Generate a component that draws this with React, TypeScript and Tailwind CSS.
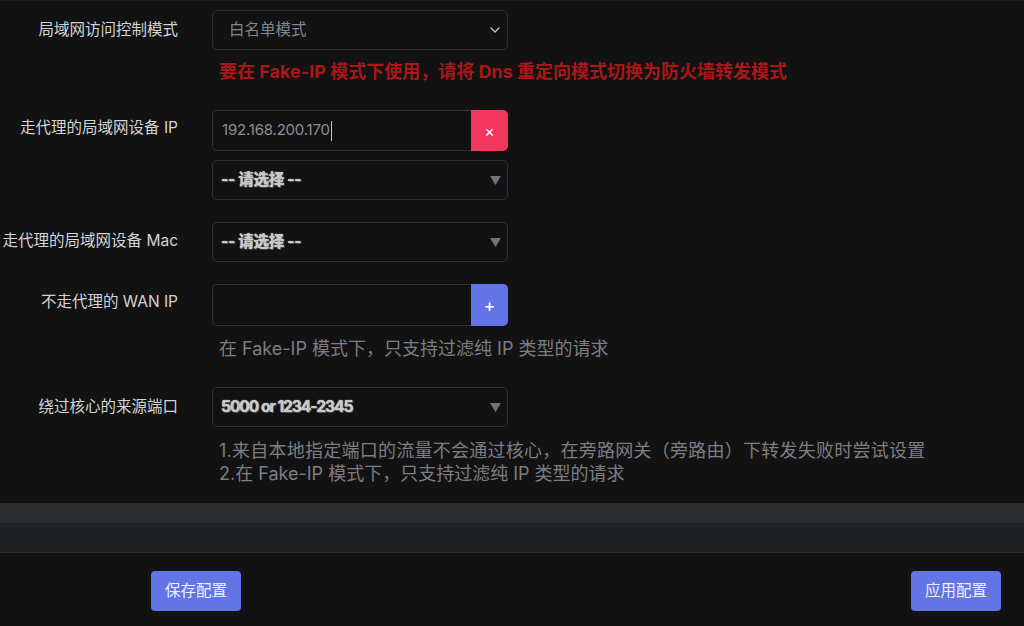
import React from "react";

const font = { fontFamily: 'Inter, "Noto Sans CJK SC", sans-serif' };

function Label({ children, className = "" }: { children: React.ReactNode; className?: string }) {
  return (
    <div className={"w-[212px] shrink-0 pr-[34px] text-right text-[15.5px] leading-[24px] text-[#d4d4d6] " + className}>
      {children}
    </div>
  );
}

function Tri() {
  return (
    <svg width="11" height="9" viewBox="0 0 11 9" className="shrink-0">
      <path d="M0 0 H11 L5.5 9 Z" fill="#6c7582" />
    </svg>
  );
}

function EmbossSelect({ text, className = "", textClass = "tracking-[-0.3px]" }: { text: string; className?: string; textClass?: string }) {
  return (
    <div className={"flex h-[40px] w-[296px] items-center justify-between rounded-[5px] border border-[#2e3034] bg-[#121212] pl-[8px] pr-[6px] " + className}>
      <span className={"text-[15.5px] font-bold text-[#c8c8c8] [text-shadow:0_0_1px_#fff,1px_1px_0_#444] " + textClass}>{text}</span>
      <Tri />
    </div>
  );
}

export default function App() {
  return (
    <div className="h-[626px] w-[1024px] overflow-hidden bg-[#121212] border-t border-[#1c1c1c]" style={font}>
      <div className="h-[502px]">
        {/* row 1 */}
        <div className="flex pt-[9px]">
          <Label className="mt-[8px]">局域网访问控制模式</Label>
          <div className="flex flex-col">
            <div className="flex h-[40px] w-[296px] items-center justify-between rounded-[5px] border border-[#2c2e32] bg-[#121212] pl-[16px] pr-[7px]">
              <span className="text-[15.5px] text-[#80868f]">白名单模式</span>
              <svg width="10" height="6" viewBox="0 0 10 6" fill="none">
                <path d="M1 1 L5 5 L9 1" stroke="#b8bcc2" strokeWidth="1.4" strokeLinecap="round" strokeLinejoin="round" />
              </svg>
            </div>
            <div className="mt-[10px] whitespace-nowrap pl-[7px] text-[18px] font-bold leading-[24px] text-[#a81818]">
              要在 Fake-IP 模式下使用，请将 Dns 重定向模式切换为防火墙转发模式
            </div>
          </div>
        </div>

        {/* row 2 */}
        <div className="mt-[26px] flex">
          <Label className="mt-[6px]">走代理的局域网设备 IP</Label>
          <div className="flex flex-col">
            <div className="flex h-[41px] w-[296px]">
              <div className="flex flex-1 items-center rounded-l-[5px] border border-r-0 border-[#2e3034] bg-[#111111] pl-[9px]">
                <span className="text-[15px] tracking-[-0.2px] text-[#8a9099]">192.168.200.170</span>
                <span className="ml-[1px] h-[20px] w-[1px] bg-[#c8c8c8]" />
              </div>
              <div className="flex w-[37px] items-center justify-center rounded-r-[5px] bg-[#f2365e] text-[16px] text-white">
                ×
              </div>
            </div>
            <EmbossSelect text="-- 请选择 --" className="mt-[9px]" />
          </div>
        </div>

        {/* row 3 */}
        <div className="mt-[22px] flex">
          <Label className="mt-[7px]">走代理的局域网设备 Mac</Label>
          <EmbossSelect text="-- 请选择 --" />
        </div>

        {/* row 4 */}
        <div className="mt-[22px] flex">
          <Label className="mt-[6px]">不走代理的 WAN IP</Label>
          <div className="flex flex-col">
            <div className="flex h-[42px] w-[296px]">
              <div className="flex-1 rounded-l-[5px] border border-r-0 border-[#2e3034] bg-[#111111]" />
              <div className="flex w-[37px] items-center justify-center rounded-r-[5px] bg-[#6374e6] text-[18px] text-white">
                +
              </div>
            </div>
            <div className="mt-[11px] whitespace-nowrap pl-[7px] text-[18px] leading-[24px] text-[#7c7e86]">
              在 Fake-IP 模式下，只支持过滤纯 IP 类型的请求
            </div>
          </div>
        </div>

        {/* row 5 */}
        <div className="mt-[26px] flex">
          <Label className="mt-[8px]">绕过核心的来源端口</Label>
          <div className="flex flex-col">
            <EmbossSelect text="5000 or 1234-2345" textClass="tracking-[-1px]" />
            <div className="mt-[12px] whitespace-nowrap pl-[7px] text-[18px] leading-[23px] text-[#7c7e86]">
              <div className="tracking-[0.25px]">1.来自本地指定端口的流量不会通过核心，在旁路网关（旁路由）下转发失败时尝试设置</div>
              <div>2.在 Fake-IP 模式下，只支持过滤纯 IP 类型的请求</div>
            </div>
          </div>
        </div>
      </div>

      <div className="h-[20px] bg-[#2a2d30]" />
      <div className="h-[30px] border-b border-[#2f3134] bg-[#202124]" />

      <div className="flex items-center justify-between pl-[151px] pr-[23px] pt-[18px]">
        <button className="h-[40px] w-[90px] rounded-[4px] bg-[#6374e6] text-[15.5px] text-[#eef0ff]">保存配置</button>
        <button className="h-[40px] w-[90px] rounded-[4px] bg-[#6374e6] text-[15.5px] text-[#eef0ff]">应用配置</button>
      </div>
    </div>
  );
}
